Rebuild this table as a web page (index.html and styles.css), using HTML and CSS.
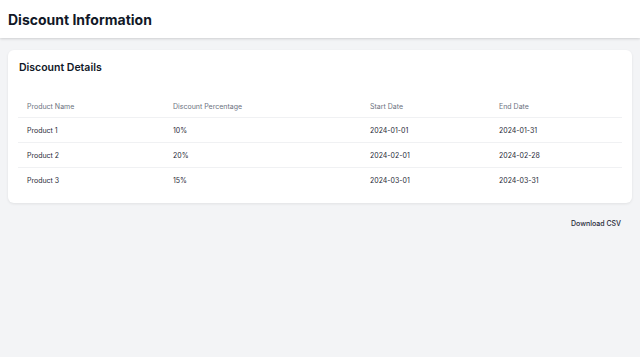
FILE: index.html
```html
<!DOCTYPE html>
<html lang="en">
<head>
    <meta charset="UTF-8">
    <meta name="viewport" content="width=device-width, initial-scale=1.0">
    <title>Discount Information</title>
    <link rel="stylesheet" href="styles.css">
</head>
<body>

<header class="topbar">
    <h1>Discount Information</h1>
</header>

<main class="content">
    <div class="card">
        <h2>Discount Details</h2>
        <table class="discount-table">
            <thead>
                <tr>
                    <th class="col-name">Product Name</th>
                    <th class="col-pct">Discount Percentage</th>
                    <th class="col-start">Start Date</th>
                    <th>End Date</th>
                </tr>
            </thead>
            <tbody>
                <tr>
                    <td>Product 1</td>
                    <td>10%</td>
                    <td>2024-01-01</td>
                    <td>2024-01-31</td>
                </tr>
                <tr>
                    <td>Product 2</td>
                    <td>20%</td>
                    <td>2024-02-01</td>
                    <td>2024-02-28</td>
                </tr>
                <tr>
                    <td>Product 3</td>
                    <td>15%</td>
                    <td>2024-03-01</td>
                    <td>2024-03-31</td>
                </tr>
            </tbody>
        </table>
    </div>

    <div class="actions">
        <button class="btn-download">Download CSV</button>
    </div>
</main>

</body>
</html>
```

FILE: styles.css
```css
body {
    font-family: 'Inter', 'Roboto', sans-serif;
    background-color: #f3f4f6;
    color: #111827;
    margin: 0;
    padding: 0;
}

.topbar {
    height: 38px;
    display: flex;
    align-items: center;
    padding: 0 8px;
    background-color: #fff;
    box-shadow: 0 1px 3px rgba(0, 0, 0, 0.1), 0 1px 2px rgba(0, 0, 0, 0.06);
}

.topbar h1 {
    margin: 0;
    font-size: 14px;
    font-weight: 700;
    color: #111827;
}

.content {
    padding: 12px 8px;
}

.card {
    background-color: #fff;
    border-radius: 6px;
    box-shadow: 0 1px 3px rgba(0, 0, 0, 0.08);
    padding: 10px 10px 11px;
}

.card h2 {
    margin: 0 0 19px;
    padding-left: 1px;
    font-size: 10.5px;
    line-height: 16px;
    font-weight: 600;
}

.discount-table {
    width: 100%;
    border-collapse: collapse;
    font-size: 7px;
}

.discount-table th {
    text-align: left;
    font-weight: 400;
    color: #6b7280;
    padding: 0 9px;
    height: 22px;
    border-bottom: 1px solid #f0f1f3;
}

.discount-table td {
    padding: 0 9px;
    height: 24px;
    color: #1f2937;
}

.discount-table tbody tr + tr td {
    border-top: 1px solid #f0f1f3;
}

.col-name {
    width: 128px;
}

.col-pct {
    width: 179px;
}

.col-start {
    width: 111px;
}

.actions {
    display: flex;
    justify-content: flex-end;
    margin-top: 10px;
    padding-right: 8px;
}

.btn-download {
    font-family: inherit;
    font-size: 7px;
    font-weight: 500;
    color: #1f2937;
    background: transparent;
    border: none;
    padding: 6px 3px;
    cursor: pointer;
}
```
